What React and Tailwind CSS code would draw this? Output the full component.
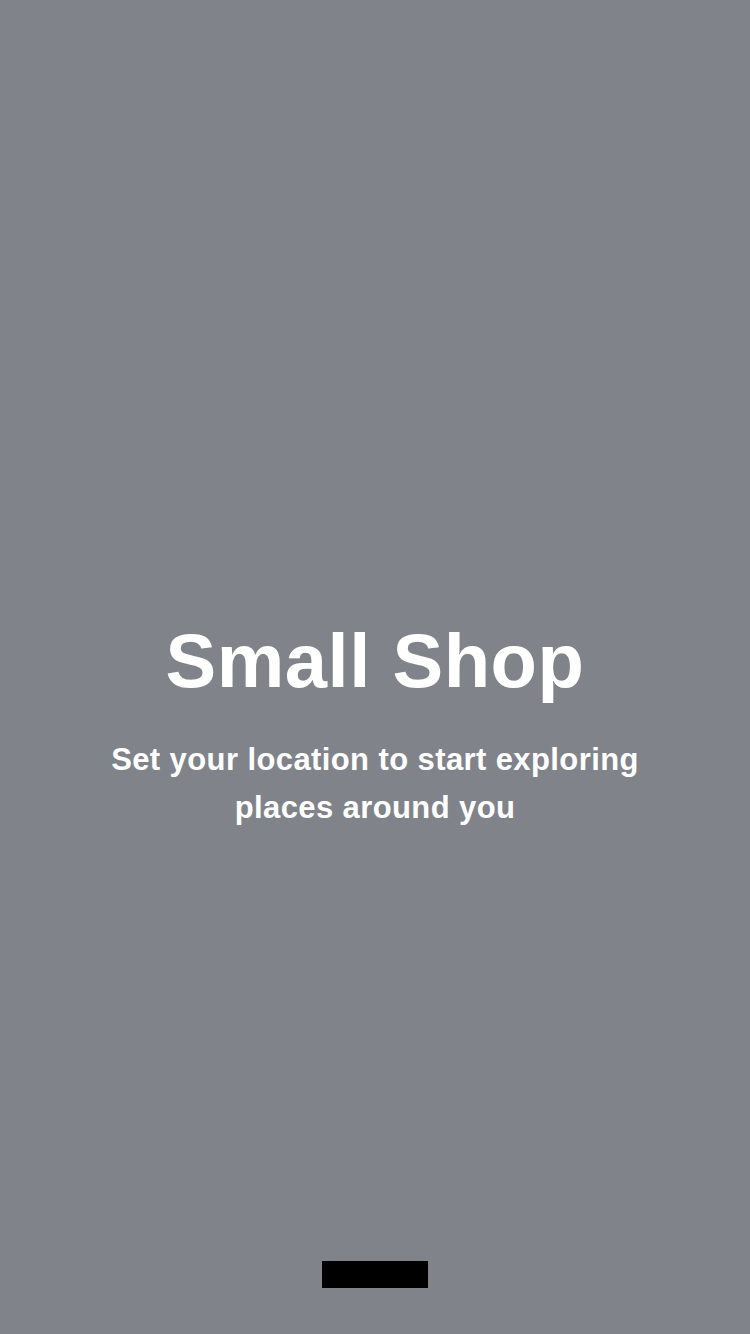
export default function App() {
  return (
    <div
      className="flex h-[1334px] w-[750px] flex-col items-center bg-[#80838a] text-white"
      style={{ fontFamily: '"Liberation Sans", Arial, Helvetica, sans-serif' }}
    >
      {/* Title + subtitle */}
      <div className="mt-[613px] flex flex-col items-center text-center">
        <h1 className="text-[76px] font-bold leading-[96px] tracking-[0.5px]">Small Shop</h1>
        <p className="mt-[27px] w-[580px] text-[31px] font-bold leading-[48px] tracking-[0.4px]">
          Set your location to start exploring places around you
        </p>
      </div>

      {/* Bottom button */}
      <div className="mt-auto mb-[46px] h-[27px] w-[106px] bg-black" />
    </div>
  );
}
